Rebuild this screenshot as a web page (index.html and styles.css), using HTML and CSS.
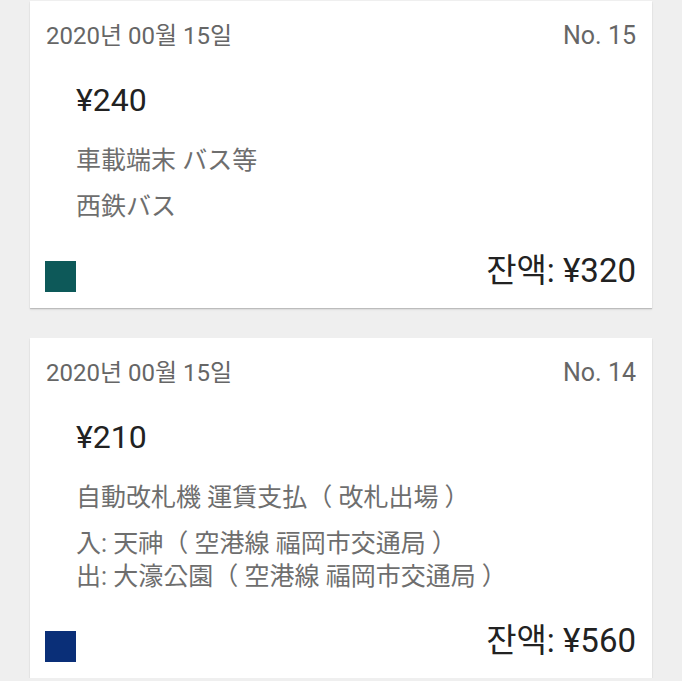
FILE: index.html
```html
<!DOCTYPE html>
<html lang="ko">
<head>
<meta charset="utf-8">
<link rel="stylesheet" href="styles.css">
</head>
<body>
<div class="list">
  <div class="card">
    <div class="head"><span class="date">2020년 00월 15일</span><span class="no">No. 15</span></div>
    <div class="amount">¥240</div>
    <div class="kind">車載端末 バス等</div>
    <div class="stations">
      <div class="line">西鉄バス</div>
    </div>
    <div class="foot"><span class="chip teal"></span><span class="balance">잔액: ¥320</span></div>
  </div>
  <div class="card">
    <div class="head"><span class="date">2020년 00월 15일</span><span class="no">No. 14</span></div>
    <div class="amount">¥210</div>
    <div class="kind">自動改札機 運賃支払（ 改札出場 ）</div>
    <div class="stations">
      <div class="line">入: 天神（ 空港線 福岡市交通局 ）</div>
      <div class="line">出: 大濠公園（ 空港線 福岡市交通局 ）</div>
    </div>
    <div class="foot"><span class="chip navy"></span><span class="balance">잔액: ¥560</span></div>
  </div>
</div>
</body>
</html>
```
FILE: styles.css
```css
html, body {
  margin: 0;
  padding: 0;
  background: #efefef;
}
body {
  font-family: Roboto, "Noto Sans CJK KR", "Noto Sans CJK JP", sans-serif;
  overflow: hidden;
}
.list {
  display: flex;
  flex-direction: column;
  gap: 30px;
  padding: 0 30px;
  margin-top: 1px;
}
.card {
  background: #fff;
  box-shadow: 0 1px 1px rgba(0, 0, 0, 0.16), 0 2px 2px rgba(0, 0, 0, 0.06);
  padding: 12px 16px 16px 15px;
}
.head {
  display: flex;
  justify-content: space-between;
  font-size: 24px;
  line-height: 46px;
  color: #666;
  padding-left: 1px;
}
.no {
  font-size: 25px;
}
.amount {
  margin-top: 21px;
  padding-left: 31px;
  font-size: 32px;
  line-height: 40px;
  color: #222;
}
.kind,
.line {
  padding-left: 31px;
  font-size: 25px;
  line-height: 33px;
  color: #6e6e6e;
}
.kind {
  margin-top: 24px;
}
.stations {
  margin-top: 13px;
}
.foot {
  margin-top: 28px;
  display: flex;
  justify-content: space-between;
  align-items: flex-end;
}
.chip {
  width: 31px;
  height: 31px;
}
.teal { background: #0d5959; }
.navy { background: #0a2f78; }
.balance {
  font-size: 33px;
  line-height: 40px;
  margin-bottom: 1px;
  color: #222;
}
```
